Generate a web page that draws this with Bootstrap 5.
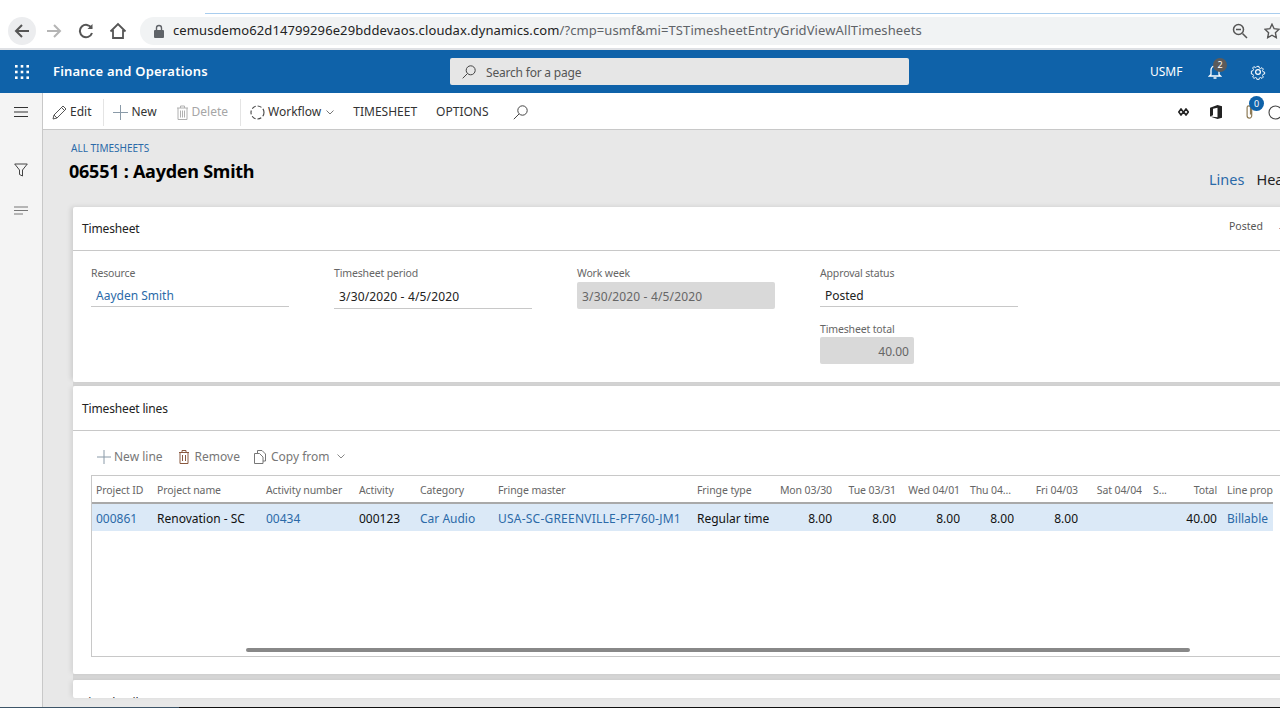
<!DOCTYPE html>
<html lang="en">
<head>
<meta charset="utf-8">
<title>All timesheets</title>
<link rel="stylesheet" href="https://cdn.jsdelivr.net/npm/bootstrap@5.3.0/dist/css/bootstrap.min.css">
<style>
html,body{height:720px;overflow:hidden;background:#fff}
body{font-family:"Noto Sans","Open Sans",sans-serif;font-size:12px;color:#222;width:1280px}
svg{display:block;flex:none}
.chrome{height:50px;padding-top:17px;position:relative;gap:0;border-bottom:2px solid #dfe1e5}
.tabline{position:absolute;left:205px;right:0;top:13px;height:1px;background:#a9cdee}
.nav-round{width:28px;height:28px;border-radius:50%}
.nav-round.active-nav{background:#ecedef}
.omni{height:28px;background:#f1f3f4;border-radius:14px 0 0 14px;margin-left:8px;flex:1;padding:0 0 0 13px;font-size:13px;color:#5f6368;letter-spacing:.1px}
.omni b{font-weight:400;color:#222}
.urltext{margin-left:2px}
.topbar{height:43px;background:#0f62a9;padding:0;color:#fff;flex-wrap:nowrap;justify-content:flex-start}
.waffle{width:43px}
.appname{font-size:13px;font-weight:600;width:407px;padding-left:10px;letter-spacing:.2px}
.searchbox{width:459px;height:27px;background:#e6e6e6;border-radius:2px;padding-left:12px;color:#555;gap:10px;letter-spacing:-.2px}
.searchbox span{padding-top:3px}
.usmf{margin-left:241px;font-size:12px;width:58px}
.bellwrap{width:42px;position:relative}
.dot{position:absolute;border-radius:50%;width:14px;height:14px;font-size:9px;line-height:14px;text-align:center;color:#fff}
.dot-gray{background:#5b5b5b;left:5px;top:-6px}
.dot-blue{background:#0f62a9;left:3px;top:-9px;width:15px;height:15px;line-height:15px;font-size:9px}
.workarea{height:614px}
.siderail{width:43px;background:#f4f4f4;border-right:1px solid #c8c8c8;flex:none}
.burger-cell{height:37px}
.filter-cell{margin-top:33px}
.lines-cell{margin-top:29px}
.mainpane{flex:1;min-width:0;overflow:hidden}
.cmdbar{height:37px;background:#fff;border-bottom:1px solid #c8c8c8;padding:2px 0 0 9px;white-space:nowrap}
.cmdbtn{display:flex;align-items:center;gap:3px;font-size:12px;color:#333;padding:0 12px 0 0;border:0;border-radius:0;background:none}
.cmdsep{width:1px;height:27px;background:#e4e4e4;margin-right:9px}
.muted-cmd{color:#a6a6a6}
.upper-cmd{padding-right:19px}
.new-cmd{padding-right:9px}
.delete-cmd{padding-left:10px;padding-right:12px}
.flow-cmd{padding-right:19px}
.flow-chev{margin-left:2px}
.options-cmd{padding-right:24px}
.cmdright{margin-left:auto;width:102px;gap:0}
.ic-diamonds{margin-right:21px}
.ic-office{margin-right:24px}
.clipcell{width:32px}
.canvaspane{height:577px;background:#e8e8e8;overflow:hidden}
.pagehead{height:77px;padding:11px 0 0 28px;position:relative}
.crumb{font-size:10px;color:#2b6aa8;line-height:14px;letter-spacing:0}
.pagetitle{font-size:18px;font-weight:700;margin:4px 0 0 -2px;color:#000;line-height:24px;letter-spacing:-.25px}
.tabsright{position:absolute;left:1166px;top:39px;width:100px;font-size:14.5px;gap:12px;white-space:nowrap}
.tabsright a{color:#2b6aa8;text-decoration:none}
.tabsright span{color:#222}
.sheet{width:1260px;margin-left:30px;border:0;border-radius:2px;background:#fff;box-shadow:-3px 0 5px -1px rgba(0,0,0,.09)}
.sheet-one{height:175px;box-shadow:-3px -1px 5px -1px rgba(0,0,0,.12)}
.sheethead{height:44px;padding:0 0 0 9px;background:#fff;border-bottom:1px solid #c8c8c8;font-size:12px;font-weight:400;color:#222;border-radius:0;letter-spacing:-.15px}
.sheethead-lines{height:45px;padding-top:2px}
.posted{margin-left:auto;width:104px;font-size:10.5px;color:#555;white-space:nowrap;padding-bottom:4px;letter-spacing:0}
.fieldsrow{padding:15px 0 0 18px;gap:45px}
.fieldcol{width:198px}
.flabel{font-size:10.5px;color:#666;line-height:14px;letter-spacing:-.15px}
.fvalue{height:27px;padding:0 5px;font-size:12px;line-height:29px;margin-top:2px;border-bottom:1px solid #c8c8c8;letter-spacing:.15px}
.fvalue.lift{height:26px;margin-top:1px;line-height:30px;letter-spacing:0}
.fvalue.linkish{color:#2b6aa8}
.fvalue.locked{background:#d9d9d9;color:#666;border:0;border-radius:2px}
.fgap{margin-top:15px}
.fvalue.totalbox{width:94px;text-align:right;letter-spacing:0;margin-top:1px;line-height:30px}
.stripgap{height:4px;background:#d6d6d6;margin-left:30px}
.stripgap-wide{height:6px;background:#d6d6d6;margin-left:30px}
.sheet-two{height:288px}
.linesbody{padding:0 0 18px 18px;height:243px}
.linetools{height:44px;color:#777;font-size:12px;padding-left:6px;padding-top:7px}
.linetools>span{display:flex;align-items:center}
.tool-new{gap:3px;margin-right:15px}
.tool-remove{gap:5px;margin-right:14px}
.tool-copy{gap:5px}
.tool-chev{margin-left:3px}
.gridbox{height:182px;border:1px solid #c8c8c8;border-right:0;flex-direction:column;display:flex}
.ts-table{table-layout:fixed;width:1181px;margin:0;font-size:12px;--bs-table-bg:transparent;border-collapse:collapse}
.ts-table th{font-weight:400;font-size:10.5px;color:#666;height:27px;padding:3px 0 0 4px;border-bottom:2px solid #a9a9a9;vertical-align:middle;white-space:nowrap;overflow:hidden;letter-spacing:-.1px}
.ts-table td{height:28px;padding:3px 0 0 4px;border:0;background:#dbe9f7;color:#111;vertical-align:middle;white-space:nowrap;overflow:hidden}
.ts-table .lnk{color:#2b6aa8}
.ts-table .num{text-align:right;padding-left:0;padding-right:0}
.ts-table .thu-head{padding-right:3px}
.ts-table .wide-caps{letter-spacing:.22px}
.ts-table .sun-col{padding-left:11px}
.ts-table .prop-col{padding-left:10px}
.scrolltrack{margin-top:auto;padding:0 0 4px 154px}
.scrollthumb{width:944px;height:4px;background:#888;border-radius:2px}
.sheet-three{height:18px;overflow:hidden;padding:14px 0 0 9px;font-size:12px;letter-spacing:-.15px}
.bottomband{height:10px;background:#e8e8e8}
.dockline{height:1px;background:linear-gradient(90deg,#3d5568 0,#3d5568 14%,#111 14%,#111 100%)}
.c1{width:61px}.c2{width:109px}.c3{width:93px}.c4{width:61px}.c5{width:78px}.c6{width:199px}.c7{width:77px}.c8{width:62px}.c9,.c10,.c12,.c13{width:64px}.c11{width:54px}.c14{width:39px}.c15{width:36px}.c16{width:56px}
</style>
</head>
<body>
<header class="chrome d-flex align-items-start">
  <div class="tabline"></div>
  <div class="d-flex align-items-center ps-2 gap-1">
    <div class="nav-round active-nav d-flex align-items-center justify-content-center">
      <svg width="16" height="16" viewBox="0 0 16 16" fill="none" stroke="#555" stroke-width="2"><path d="M15 8H2M8 2L2 8l6 6"/></svg></div>
    <div class="nav-round d-flex align-items-center justify-content-center">
      <svg width="16" height="16" viewBox="0 0 16 16" fill="none" stroke="#b5b5b5" stroke-width="2"><path d="M1 8h13M8 2l6 6-6 6"/></svg></div>
    <div class="nav-round d-flex align-items-center justify-content-center">
      <svg width="16" height="16" viewBox="0 0 16 16" fill="none" stroke="#555" stroke-width="2"><path d="M13.500 5A6.200 6.200 0 1 0 14 10"/><path d="M14.500 1v5h-5" fill="#555" stroke="none"/></svg></div>
    <div class="nav-round d-flex align-items-center justify-content-center">
      <svg width="18" height="18" viewBox="0 0 18 18" fill="none" stroke="#555" stroke-width="1.800"><path d="M1.500 9.500L9 2l7.500 7.500M4 8v8h10V8"/></svg></div>
  </div>
  <div class="omni d-flex align-items-center">
    <svg width="12" height="14" viewBox="0 0 12 14" fill="#5f6368" class="me-1"><path d="M2 6h8a1 1 0 0 1 1 1v6a1 1 0 0 1-1 1H2a1 1 0 0 1-1-1V7a1 1 0 0 1 1-1z"/><path d="M3.500 6V4a2.500 2.500 0 0 1 5 0v2" fill="none" stroke="#5f6368" stroke-width="1.400"/></svg>
    <span class="ms-1 urltext"><b>cemusdemo62d14799296e29bddevaos.cloudax.dynamics.com</b>/?cmp=usmf&amp;mi=TSTimesheetEntryGridViewAllTimesheets</span>
    <svg class="ms-auto" width="16" height="16" viewBox="0 0 16 16" fill="none" stroke="#555" stroke-width="1.500"><circle cx="6.500" cy="6.500" r="5"/><path d="M10.500 10.500L15 15M4 6.500h5"/></svg>
    <svg class="ms-3" width="16" height="16" viewBox="0 0 16 16" fill="none" stroke="#555" stroke-width="1.400"><path d="M8 1.200l2.100 4.500 4.900.6-3.600 3.400.9 4.900L8 12.200l-4.300 2.400.9-4.900L1 6.300l4.900-.6z"/></svg>
  </div>
</header>

<nav class="navbar topbar">
  <div class="waffle d-flex justify-content-center">
    <svg width="14" height="14" viewBox="0 0 14 14" fill="#fff"><rect x="0" y="0" width="2.600" height="2.600"/><rect x="5.700" y="0" width="2.600" height="2.600"/><rect x="11.400" y="0" width="2.600" height="2.600"/><rect x="0" y="5.700" width="2.600" height="2.600"/><rect x="5.700" y="5.700" width="2.600" height="2.600"/><rect x="11.400" y="5.700" width="2.600" height="2.600"/><rect x="0" y="11.400" width="2.600" height="2.600"/><rect x="5.700" y="11.400" width="2.600" height="2.600"/><rect x="11.400" y="11.400" width="2.600" height="2.600"/></svg>
  </div>
  <div class="appname">Finance and Operations</div>
  <div class="searchbox d-flex align-items-center">
    <svg width="14" height="14" viewBox="0 0 14 14" fill="none" stroke="#444" stroke-width="1"><circle cx="8.700" cy="5.300" r="4.500"/><path d="M5.500 8.500L.7 13.300"/></svg>
    <span>Search for a page</span>
  </div>
  <div class="usmf">USMF</div>
  <div class="bellwrap">
    <svg width="14" height="15" viewBox="0 0 14 15" fill="none" stroke="#fff" stroke-width="1.300"><path d="M3 10.500V6a4 4 0 0 1 8 0v4.500l1.500 1.500h-11zM5.500 14h3"/></svg>
    <span class="dot dot-gray">2</span>
  </div>
  <svg width="16" height="16" viewBox="0 0 16 16" fill="none" stroke="#fff" stroke-width="1.200"><circle cx="8" cy="8" r="2.400"/><path d="M6.800 1h2.400l.4 2 1.600.7 1.800-1.100 1.700 1.700-1.100 1.800.7 1.600 2 .4v2.400l-2 .4-.7 1.600 1.100 1.800-1.700 1.700-1.800-1.100-1.600.7-.4 2H6.800l-.4-2-1.600-.7-1.800 1.100-1.700-1.700 1.100-1.800-.7-1.600-2-.4V6.800l2-.4.7-1.600-1.100-1.800L2.800 1.300l1.800 1.100 1.600-.7z" transform="translate(1.600 1.600) scale(.8)"/></svg>
</nav>

<div class="workarea d-flex">
  <aside class="siderail d-flex flex-column align-items-center">
    <div class="burger-cell d-flex align-items-center">
      <svg width="14" height="12" viewBox="0 0 14 12" stroke="#333" stroke-width="1.200"><path d="M0 1.500h14M0 6h14M0 10.500h14"/></svg>
    </div>
    <div class="filter-cell">
      <svg width="14" height="14" viewBox="0 0 14 14" fill="none" stroke="#444" stroke-width="1"><path d="M.7 1h12.600L8.500 7v6l-3-1.500V7z"/></svg>
    </div>
    <div class="lines-cell">
      <svg width="14" height="10" viewBox="0 0 14 10" stroke="#777" stroke-width="1"><path d="M0 1h14M0 4.500h14"/><path d="M0 8h9"/></svg>
    </div>
  </aside>
  <main class="mainpane">
    <div class="cmdbar d-flex align-items-center">
      <button class="btn cmdbtn" type="button">
        <svg width="15" height="15" viewBox="0 0 15 15" fill="none" stroke="#555" stroke-width="1"><path d="M1 14l1-4L11 1l3 3-9 9zM2 10l3 3M9.500 2.500l3 3"/></svg>Edit</button>
      <div class="cmdsep"></div>
      <button class="btn cmdbtn new-cmd" type="button">
        <svg width="15" height="15" viewBox="0 0 15 15" stroke="#8a9aa8" stroke-width="1"><path d="M7.500 0v15M0 7.500h15"/></svg>New</button>
      <button class="btn cmdbtn muted-cmd delete-cmd" type="button">
        <svg width="13" height="15" viewBox="0 0 13 15" fill="none" stroke="#b0b0b0" stroke-width="1"><path d="M1 3h11M4.500 3V1h4v2M2 3v11.500h9V3M4.500 5.500v7M6.500 5.500v7M8.500 5.500v7"/></svg>Delete</button>
      <div class="cmdsep"></div>
      <button class="btn cmdbtn flow-cmd" type="button">
        <svg width="15" height="15" viewBox="0 0 15 15" fill="none" stroke="#444" stroke-width="1.100" stroke-dasharray="4 2"><circle cx="7.500" cy="7.500" r="6.500"/></svg>Workflow
        <svg class="flow-chev" width="8" height="5" viewBox="0 0 8 5" fill="none" stroke="#777"><path d="M.5.5L4 4 7.500.5"/></svg></button>
      <button class="btn cmdbtn upper-cmd" type="button">TIMESHEET</button>
      <button class="btn cmdbtn options-cmd" type="button">OPTIONS</button>
      <svg width="15" height="15" viewBox="0 0 15 15" fill="none" stroke="#444" stroke-width="1"><circle cx="9.500" cy="5.500" r="4.700"/><path d="M6 9L.8 14.200"/></svg>
      <div class="cmdright d-flex align-items-center">
        <svg class="ic-diamonds" width="11" height="8" viewBox="0 0 11 8" fill="none" stroke="#222" stroke-width="1.600"><path d="M3 1l2.300 3L3 7 .8 4zM8 1l2.300 3L8 7 5.700 4z"/></svg>
        <svg class="ic-office" width="12" height="14" viewBox="0 0 12 14"><path d="M0 2.800L7.500 0 12 1.300v11.400L7.500 14 0 11.500 7.500 12.300V2.700L3 3.700v6.600l-3 1.200z" fill="#222"/></svg>
        <div class="position-relative clipcell">
          <svg width="7" height="14" viewBox="0 0 7 14" fill="none" stroke="#8d7a55" stroke-width="1.200"><path d="M5.700 3.500v7.300a2.300 2.300 0 0 1-4.600 0V2.600a1.700 1.700 0 0 1 3.400 0v7"/></svg>
          <span class="dot dot-blue">0</span>
        </div>
        <svg width="12" height="15" viewBox="0 0 12 15" fill="none" stroke="#444" stroke-width="1.100"><circle cx="7.500" cy="7.500" r="6.500"/></svg>
      </div>
    </div>
    <div class="canvaspane">
      <div class="pagehead">
        <div class="crumb">ALL TIMESHEETS</div>
        <div class="pagetitle">06551 : Aayden Smith</div>
        <div class="tabsright d-flex"><a href="#">Lines</a><span>Header</span></div>
      </div>
      <section class="card sheet sheet-one">
        <div class="card-header sheethead d-flex align-items-center">
          <span>Timesheet</span>
          <span class="posted d-flex align-items-center gap-3">Posted <svg width="8" height="8" viewBox="0 0 8 8" fill="none" stroke="#b5533c"><path d="M.5 6L4 2l3.500 4"/></svg></span>
        </div>
        <div class="d-flex fieldsrow">
          <div class="fieldcol"><div class="flabel">Resource</div><div class="fvalue lift linkish">Aayden Smith</div></div>
          <div class="fieldcol"><div class="flabel">Timesheet period</div><div class="fvalue">3/30/2020 - 4/5/2020</div></div>
          <div class="fieldcol"><div class="flabel">Work week</div><div class="fvalue locked">3/30/2020 - 4/5/2020</div></div>
          <div class="fieldcol"><div class="flabel">Approval status</div><div class="fvalue lift">Posted</div>
            <div class="flabel fgap">Timesheet total</div><div class="fvalue locked totalbox">40.00</div></div>
        </div>
      </section>
      <div class="stripgap"></div>
      <section class="card sheet sheet-two">
        <div class="card-header sheethead sheethead-lines d-flex align-items-center">Timesheet lines</div>
        <div class="linesbody">
          <div class="linetools d-flex align-items-center">
            <span class="tool-new"><svg width="14" height="14" viewBox="0 0 14 14" stroke="#8a9aa8"><path d="M7 0v14M0 7h14"/></svg>New line</span>
            <span class="tool-remove"><svg width="12" height="14" viewBox="0 0 12 14" fill="none" stroke="#8a5a40" stroke-width="1"><path d="M1 2.500h10M4 2.500V.5h4v2M2 2.500v11h8v-11M4.500 5v6M7.500 5v6"/></svg>Remove</span>
            <span class="tool-copy"><svg width="12" height="14" viewBox="0 0 12 14" fill="none" stroke="#777" stroke-width="1"><path d="M3.500 3.500V.5h4.500l3.500 3.500v7H9M.5 3.500h5l3.500 3.500v6.500H.5z"/></svg>Copy from<svg class="tool-chev" width="8" height="5" viewBox="0 0 8 5" fill="none" stroke="#888"><path d="M.5.5L4 4 7.500.5"/></svg></span>
          </div>
          <div class="gridbox">
            <table class="table ts-table">
              <colgroup>
                <col class="c1"><col class="c2"><col class="c3"><col class="c4"><col class="c5"><col class="c6"><col class="c7"><col class="c8"><col class="c9"><col class="c10"><col class="c11"><col class="c12"><col class="c13"><col class="c14"><col class="c15"><col class="c16">
              </colgroup>
              <thead><tr>
                <th>Project ID</th><th>Project name</th><th>Activity number</th><th>Activity</th><th>Category</th><th>Fringe master</th><th>Fringe type</th>
                <th class="num">Mon 03/30</th><th class="num">Tue 03/31</th><th class="num">Wed 04/01</th><th class="num thu-head">Thu 04...</th><th class="num">Fri 04/03</th><th class="num">Sat 04/04</th><th class="sun-col">S...</th><th class="num">Total</th><th class="prop-col">Line prope</th>
              </tr></thead>
              <tbody><tr>
                <td class="lnk">000861</td><td>Renovation - SC</td><td class="lnk">00434</td><td>000123</td><td class="lnk">Car Audio</td><td class="lnk wide-caps">USA-SC-GREENVILLE-PF760-JM1</td><td>Regular time</td>
                <td class="num">8.00</td><td class="num">8.00</td><td class="num">8.00</td><td class="num">8.00</td><td class="num">8.00</td><td></td><td></td><td class="num">40.00</td><td class="lnk prop-col">Billable</td>
              </tr></tbody>
            </table>
            <div class="scrolltrack"><div class="scrollthumb"></div></div>
          </div>
        </div>
      </section>
      <div class="stripgap-wide"></div>
      <section class="card sheet sheet-three">Line details</section>
      <div class="bottomband"></div>
    </div>
  </main>
</div>
<div class="dockline"></div>
<script src="https://cdn.jsdelivr.net/npm/bootstrap@5.3.0/dist/js/bootstrap.bundle.min.js"></script>
</body>
</html>
